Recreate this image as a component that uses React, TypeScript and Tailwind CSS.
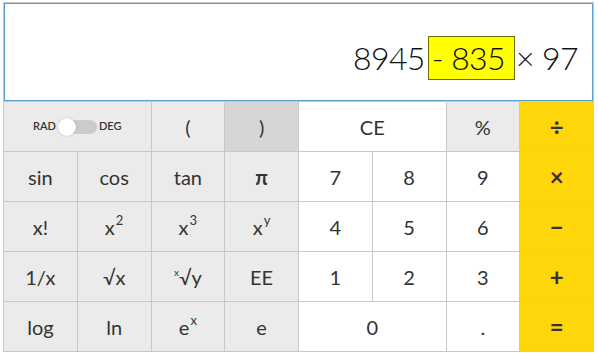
import React from "react";

const font = { fontFamily: "Lato, 'Open Sans', sans-serif" };

function Cell({
  children,
  className = "",
}: {
  children: React.ReactNode;
  className?: string;
}) {
  return (
    <div
      className={
        "flex h-[49px] items-center justify-center text-[20px] text-[#333333] " +
        className
      }
    >
      {children}
    </div>
  );
}

const sup = "relative -top-[6px] ml-[1px] text-[13px] leading-none";

export default function App() {
  return (
    <div className="pl-[3px] pt-[2px]" style={font}>
      <div className="w-[591px]">
        <div className="border border-[#c8c8c8]">
          <div className="flex h-[98px] items-center justify-end border border-[#5b9fd2] bg-white pr-[14px] pt-[12px] text-[32px] font-light leading-none tracking-[-0.6px] text-[#111111]">
            <span>8945</span>
            <span className="ml-[3px] inline-flex h-[44px] items-center border border-[#6e6e00] bg-[#ffff00] pl-[3px] pr-[9px]">
              -&nbsp;835
            </span>
            <span className="ml-[1px]">×&nbsp;97</span>
          </div>
        </div>
        <div className="grid grid-cols-8 gap-px border border-t-0 border-[#c8c8c8] bg-[#c8c8c8]">
          <Cell className="col-span-2 bg-[#ebebeb]">
            <div className="flex items-center text-[11px] font-semibold text-[#333]">
              <span className="mr-[3px]">RAD</span>
              <span className="relative h-[14px] w-[38px] rounded-full bg-[#cbcbcb]">
                <span className="absolute -left-[1px] -top-[2px] h-[18px] w-[18px] rounded-full bg-white shadow-[0_0_2px_rgba(0,0,0,0.25)]" />
              </span>
              <span className="ml-[2px]">DEG</span>
            </div>
          </Cell>
          <Cell className="bg-[#ebebeb]">(</Cell>
          <Cell className="bg-[#d6d6d6]">)</Cell>
          <Cell className="col-span-2 bg-white">CE</Cell>
          <Cell className="bg-[#ebebeb]">%</Cell>
          <Cell className="bg-[#ffd60a] text-[24px] font-bold">÷</Cell>

          <Cell className="bg-[#ebebeb]">sin</Cell>
          <Cell className="bg-[#ebebeb]">cos</Cell>
          <Cell className="bg-[#ebebeb]">tan</Cell>
          <Cell className="bg-[#ebebeb] font-bold">π</Cell>
          <Cell className="bg-white">7</Cell>
          <Cell className="bg-white">8</Cell>
          <Cell className="bg-white">9</Cell>
          <Cell className="bg-[#ffd60a] text-[24px] font-bold">×</Cell>

          <Cell className="bg-[#ebebeb]">x!</Cell>
          <Cell className="bg-[#ebebeb]">
            x<span className={sup}>2</span>
          </Cell>
          <Cell className="bg-[#ebebeb]">
            x<span className={sup}>3</span>
          </Cell>
          <Cell className="bg-[#ebebeb]">
            x<span className={sup}>y</span>
          </Cell>
          <Cell className="bg-white">4</Cell>
          <Cell className="bg-white">5</Cell>
          <Cell className="bg-white">6</Cell>
          <Cell className="bg-[#ffd60a] text-[24px] font-bold">−</Cell>

          <Cell className="bg-[#ebebeb]">1/x</Cell>
          <Cell className="bg-[#ebebeb]">√x</Cell>
          <Cell className="bg-[#ebebeb]">
            <span className="relative -top-[5px] text-[10px] leading-none">x</span>√y
          </Cell>
          <Cell className="bg-[#ebebeb]">EE</Cell>
          <Cell className="bg-white">1</Cell>
          <Cell className="bg-white">2</Cell>
          <Cell className="bg-white">3</Cell>
          <Cell className="bg-[#ffd60a] text-[24px] font-bold">+</Cell>

          <Cell className="bg-[#ebebeb]">log</Cell>
          <Cell className="bg-[#ebebeb]">ln</Cell>
          <Cell className="bg-[#ebebeb]">
            e<span className={sup}>x</span>
          </Cell>
          <Cell className="bg-[#ebebeb]">e</Cell>
          <Cell className="col-span-2 bg-white">0</Cell>
          <Cell className="bg-white">.</Cell>
          <Cell className="bg-[#ffd60a] text-[24px] font-bold">=</Cell>
        </div>
      </div>
    </div>
  );
}
